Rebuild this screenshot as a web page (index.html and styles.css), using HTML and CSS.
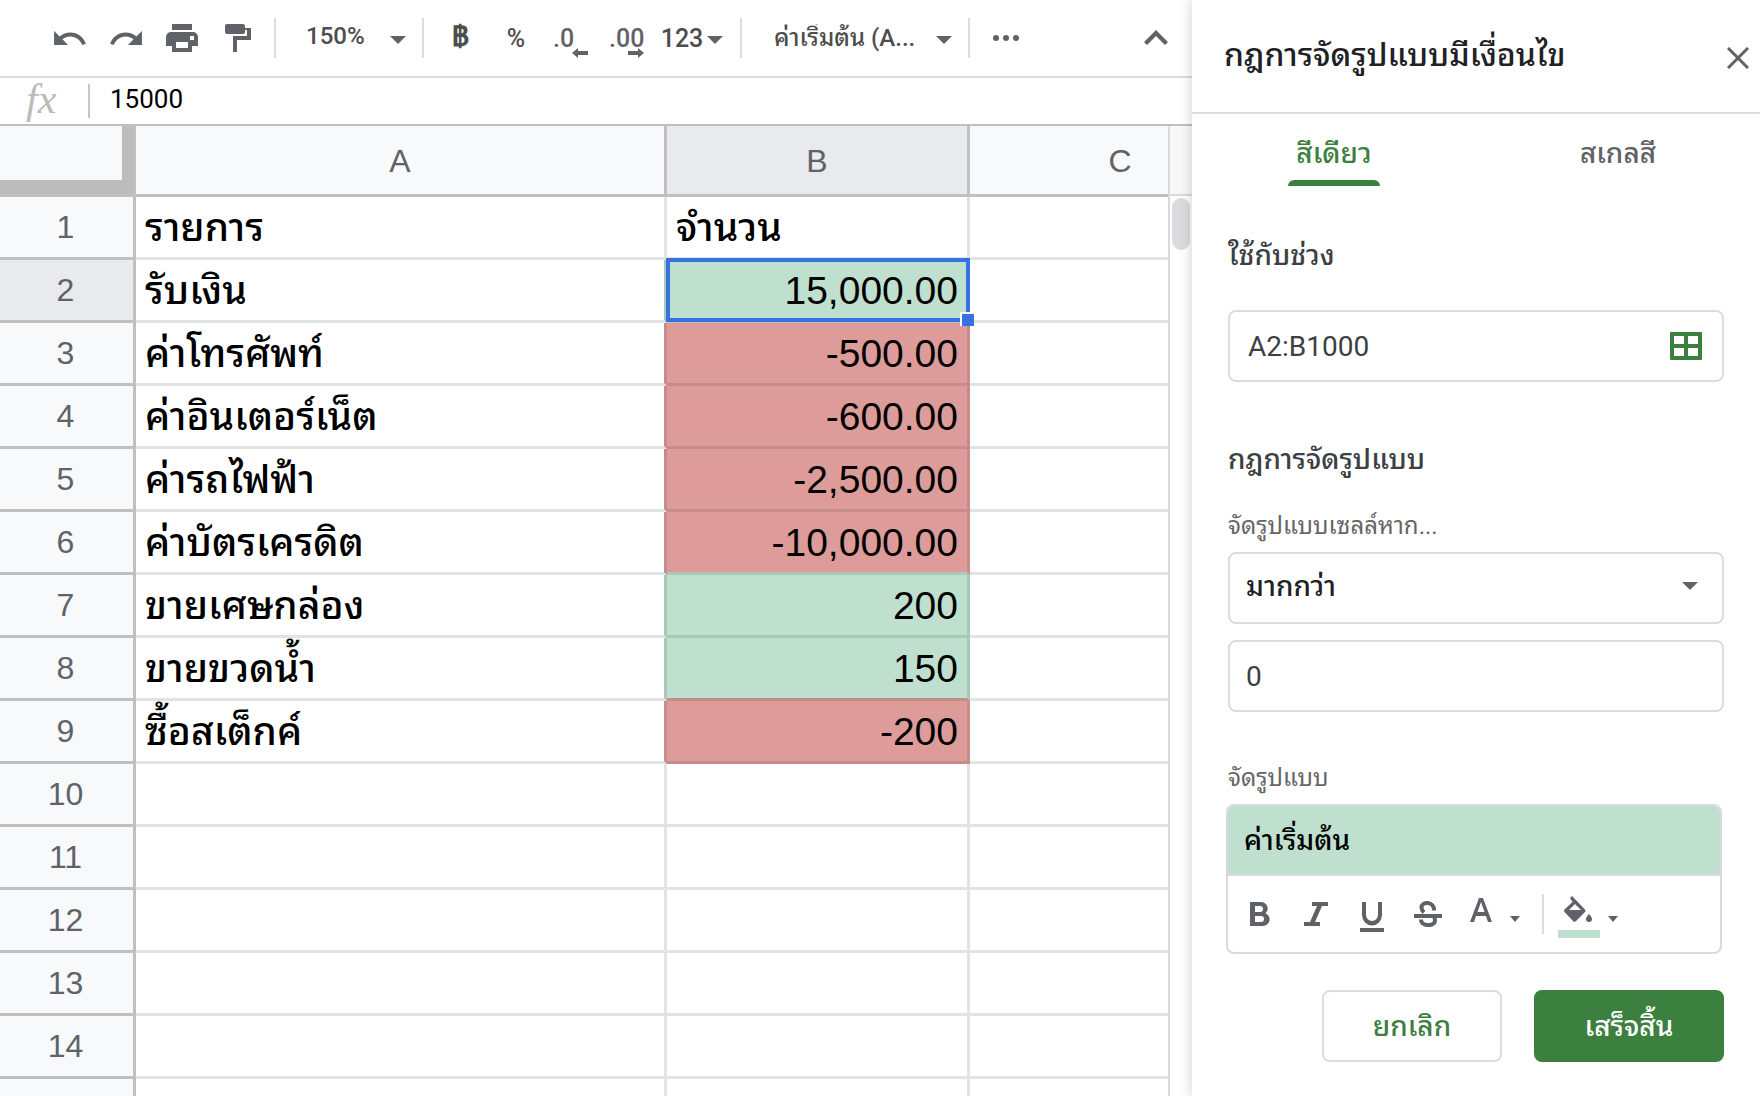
FILE: index.html
```html
<!DOCTYPE html>
<html lang="th">
<head>
    <meta charset="UTF-8">
    <meta name="viewport" content="width=device-width, initial-scale=1.0">
    <title>กฎการจัดรูปแบบมีเงื่อนไข</title>
    <link rel="stylesheet" href="styles.css">
</head>
<body>

    <main class="sheet">

        <!-- Toolbar -->
        <div class="toolbar">
            <button class="tool" aria-label="Undo">
                <svg width="32" height="14" viewBox="2 7 20.5 9"><path d="M12.5 8c-2.65 0-5.05.99-6.9 2.6L2 7v9h9l-3.62-3.62c1.39-1.16 3.16-1.88 5.12-1.88 3.54 0 6.55 2.31 7.6 5.5l2.37-.78C21.08 11.03 17.15 8 12.5 8z"/></svg>
            </button>
            <button class="tool" aria-label="Redo">
                <svg width="32" height="14" viewBox="1.5 7 20.5 9"><path d="M18.4 10.6C16.55 8.99 14.15 8 11.5 8c-4.65 0-8.58 3.03-9.96 7.22L3.9 16c1.05-3.19 4.05-5.5 7.6-5.5 1.95 0 3.73.72 5.12 1.88L13 16h9V7l-3.6 3.6z"/></svg>
            </button>
            <button class="tool" aria-label="Print">
                <svg width="32" height="28" viewBox="0 0 32 28"><path fill-rule="evenodd" d="M6 0h20v6H6zM5 8h22a5 5 0 0 1 5 5v9h-6v6H6v-6H0v-9a5 5 0 0 1 5-5zM10 18v6h12v-6zM24 12v4h4v-4z"/></svg>
            </button>
            <button class="tool" aria-label="Paint format">
                <svg width="26" height="28" viewBox="0 0 26 28"><path d="M2 0h16a2 2 0 0 1 2 2v2h6v12H12v12H8V12h14V6h-2v2a2 2 0 0 1-2 2H2a2 2 0 0 1-2-2V2a2 2 0 0 1 2-2z"/></svg>
            </button>
            <span class="divider"></span>
            <div class="dropdown zoom">
                <select aria-label="Zoom"><option>150%</option></select>
            </div>
            <span class="divider"></span>
            <button class="tool currency">฿</button>
            <button class="tool">%</button>
            <button class="tool decimal">.0
                <svg class="arrow" width="16" height="10" viewBox="0 0 16 10"><path d="M0 5l6-5v3h10v4H6v3z"/></svg>
            </button>
            <button class="tool decimal">.00
                <svg class="arrow" width="16" height="10" viewBox="0 0 16 10"><path d="M16 5l-6-5v3H0v4h10v3z"/></svg>
            </button>
            <button class="tool formats">123 <span class="caret"></span></button>
            <span class="divider"></span>
            <div class="dropdown font">
                <select aria-label="Font"><option>ค่าเริ่มต้น (A...</option></select>
            </div>
            <span class="divider"></span>
            <button class="tool" aria-label="More">
                <svg width="26" height="6" viewBox="0 0 26 6"><circle cx="3" cy="3" r="3"/><circle cx="13" cy="3" r="3"/><circle cx="23" cy="3" r="3"/></svg>
            </button>
            <button class="tool collapse" aria-label="Hide menus">
                <svg width="24" height="16" viewBox="0 0 24 16"><path d="M12 0l12 12-3 3-9-9-9 9-3-3z"/></svg>
            </button>
        </div>

        <!-- Formula bar -->
        <div class="formula-bar">
            <label class="fx" for="formula">fx</label>
            <input id="formula" type="text" value="15000">
        </div>

        <!-- Grid -->
        <div class="grid-area">
            <div class="grid">
                <table>
                    <colgroup>
                        <col class="col-head">
                        <col class="col-a">
                        <col class="col-b">
                        <col class="col-c">
                    </colgroup>
                    <thead>
                        <tr><th class="corner"></th><th>A</th><th class="active">B</th><th>C</th></tr>
                    </thead>
                    <tbody>
                        <tr><th>1</th><td>รายการ</td><td>จำนวน</td><td></td></tr>
                        <tr class="plus"><th class="active">2</th><td>รับเงิน</td><td class="num">15,000.00<span class="selection"></span><span class="handle"></span></td><td></td></tr>
                        <tr class="minus"><th>3</th><td>ค่าโทรศัพท์</td><td class="num">-500.00</td><td></td></tr>
                        <tr class="minus"><th>4</th><td>ค่าอินเตอร์เน็ต</td><td class="num">-600.00</td><td></td></tr>
                        <tr class="minus"><th>5</th><td>ค่ารถไฟฟ้า</td><td class="num">-2,500.00</td><td></td></tr>
                        <tr class="minus before-plus"><th>6</th><td>ค่าบัตรเครดิต</td><td class="num">-10,000.00</td><td></td></tr>
                        <tr class="plus"><th>7</th><td>ขายเศษกล่อง</td><td class="num">200</td><td></td></tr>
                        <tr class="plus before-minus"><th>8</th><td>ขายขวดน้ำ</td><td class="num">150</td><td></td></tr>
                        <tr class="minus"><th>9</th><td>ซื้อสเต็กค์</td><td class="num">-200</td><td></td></tr>
                        <tr><th>10</th><td></td><td></td><td></td></tr>
                        <tr><th>11</th><td></td><td></td><td></td></tr>
                        <tr><th>12</th><td></td><td></td><td></td></tr>
                        <tr><th>13</th><td></td><td></td><td></td></tr>
                        <tr><th>14</th><td></td><td></td><td></td></tr>
                        <tr><th></th><td></td><td></td><td></td></tr>
                    </tbody>
                </table>
            </div>
            <div class="scrollbar">
                <div class="scroll-top"></div>
                <div class="thumb"></div>
            </div>
        </div>
    </main>

    <!-- Conditional format rules -->
    <aside class="panel">
        <header class="panel-header">
            <h1>กฎการจัดรูปแบบมีเงื่อนไข</h1>
            <button class="close" aria-label="Close">
                <svg width="22" height="22" viewBox="0 0 22 22"><path d="M1 1l20 20M21 1L1 21"/></svg>
            </button>
        </header>

        <nav class="tabs">
            <button class="tab current"><span>สีเดียว</span></button>
            <button class="tab"><span>สเกลสี</span></button>
        </nav>

        <form class="rules">
            <label class="title" for="range">ใช้กับช่วง</label>
            <div class="field range">
                <input id="range" type="text" value="A2:B1000">
                <svg width="32" height="28" viewBox="0 0 32 28"><path fill-rule="evenodd" d="M1 0h30a1 1 0 0 1 1 1v26a1 1 0 0 1-1 1H1a1 1 0 0 1-1-1V1a1 1 0 0 1 1-1zM4 4v8h10V4zM18 4v8h10V4zM4 16v8h10v-8zM18 16v8h10v-8z"/></svg>
            </div>

            <h2 class="title">กฎการจัดรูปแบบ</h2>
            <label class="hint" for="condition">จัดรูปแบบเซลล์หาก...</label>
            <div class="field dropdown condition">
                <select id="condition"><option>มากกว่า</option></select>
            </div>
            <div class="field">
                <input type="text" value="0" aria-label="Value">
            </div>

            <p class="hint">จัดรูปแบบ</p>
            <div class="style-box">
                <button type="button" class="preview">ค่าเริ่มต้น</button>
                <div class="style-tools">
                    <button type="button" aria-label="Bold">
                        <svg width="20" height="24" viewBox="0 0 20 24"><path fill-rule="evenodd" d="M0 0h11a7 6.500 0 0 1 4.500 11.200A7 6.700 0 0 1 12 24H0zM5 4v6h5a3 3 0 0 0 0-6zM5 14v6h6a3 3 0 0 0 0-6z"/></svg>
                    </button>
                    <button type="button" aria-label="Italic">
                        <svg width="24" height="24" viewBox="0 0 24 24"><path d="M8 0h16v4h-6l-7 16h5v4H0v-4h6l7-16H8z"/></svg>
                    </button>
                    <button type="button" aria-label="Underline">
                        <svg width="24" height="36" viewBox="0 -6 24 36"><path d="M0 26h24v4H0zM2 0h4v13a6 6 0 0 0 12 0V0h4v13a10 10.500 0 0 1-20 0z"/></svg>
                    </button>
                    <button type="button" aria-label="Strikethrough">
                        <svg width="28" height="26" viewBox="0 0 28 26"><path d="M0 13h28v4H0z"/><path class="line" d="M20 9.500C20.500 0 7.500 0 7.500 6.500C7.500 8.500 8.500 10 10 11.500M7 18.500C7 26 21 25.500 21 19.500Q21 17.500 20 16"/></svg>
                    </button>
                    <button type="button" class="with-caret" aria-label="Text color">
                        <svg width="22" height="24" viewBox="0 0 22 24"><path fill-rule="evenodd" d="M9 0h4l9 24h-4l-2-6H6l-2 6H0zM7.500 14h7L11 4z"/></svg>
                        <span class="caret small"></span>
                    </button>
                    <span class="divider"></span>
                    <button type="button" class="with-caret fill" aria-label="Fill color">
                        <span class="bucket">
                            <svg width="30" height="26" viewBox="0 0 30 26"><path fill-rule="evenodd" d="M6 2l2-2 13 13.500a2 2 0 0 1 0 2.500l-9 9a2 2 0 0 1-3 0l-8.500-9a2 2 0 0 1 0-2.500L8.500 6zM11 8l-6 6h12z"/><path d="M25 18c2 2 3 4 3 5a3 3 0 0 1-6 0c0-1 1-3 3-5z"/></svg>
                        </span>
                        <span class="caret small"></span>
                    </button>
                </div>
            </div>

            <div class="actions">
                <button type="button" class="cancel">ยกเลิก</button>
                <button type="submit" class="done">เสร็จสิ้น</button>
            </div>
        </form>
    </aside>

</body>
</html>
```
FILE: styles.css
```css
* {
    box-sizing: border-box;
}

body {
    margin: 0;
    display: flex;
    height: 100vh;
    overflow: hidden;
    background-color: #fff;
    font-family: Roboto, "Noto Sans Thai Looped", "Liberation Sans", sans-serif;
    color: #3c4043;
}

button, select, input {
    margin: 0;
    padding: 0;
    border: none;
    background: none;
    font: inherit;
    color: inherit;
    outline: none;
}

button {
    cursor: pointer;
}

svg {
    display: block;
    fill: #5f6368;
}

.sheet {
    flex: 1;
    min-width: 0;
    display: flex;
    flex-direction: column;
}

/* toolbar */
.toolbar {
    display: flex;
    align-items: center;
    height: 78px;
    padding-left: 42px;
    padding-right: 8px;
    border-bottom: 2px solid #dadce0;
    font-size: 25px;
    font-weight: 500;
    color: #4d4d4d;
}

.tool {
    flex: none;
    display: flex;
    align-items: center;
    justify-content: center;
    width: 56px;
    height: 48px;
}

.divider {
    flex: none;
    width: 2px;
    height: 40px;
    margin-left: 8px;
    background-color: #dadce0;
}

.divider + .tool {
    margin-left: 8px;
}

.dropdown + .divider {
    margin-left: 0;
}

.dropdown {
    position: relative;
}

.dropdown select {
    width: 100%;
    height: 100%;
    appearance: none;
}

.dropdown::after, .caret {
    content: "";
    border: 8px solid transparent;
    border-top-color: #5f6368;
    border-bottom: none;
}

.dropdown::after {
    position: absolute;
    top: 50%;
    right: 16px;
    margin-top: -2px;
    pointer-events: none;
}

.zoom, .font {
    width: 146px;
    height: 48px;
    font-size: 24px;
}

.zoom select {
    padding-left: 30px;
    padding-bottom: 4px;
}

.font {
    width: 226px;
}

.font select {
    padding-left: 32px;
}

.currency {
    padding-bottom: 4px;
    font-family: "Liberation Sans", sans-serif;
    font-size: 28px;
    font-weight: 700;
}

.decimal {
    position: relative;
    justify-content: flex-start;
    padding-left: 9px;
    color: #5f6368;
}

.arrow {
    position: absolute;
    right: 12px;
    bottom: 4px;
}

.formats {
    width: 76px;
    gap: 4px;
    padding-right: 4px;
}

.formats .caret {
    margin-top: 4px;
}

.collapse {
    margin-left: auto;
}

/* formula bar */
.formula-bar {
    display: flex;
    align-items: flex-start;
    height: 48px;
    padding-top: 6px;
    border-bottom: 2px solid #c0c0c0;
}

.fx {
    width: 90px;
    height: 34px;
    padding-left: 26px;
    border-right: 2px solid #c6c6c6;
    font: italic 42px/30px "Liberation Serif", serif;
    color: #bbb;
}

.formula-bar input {
    flex: 1;
    height: 30px;
    padding-left: 20px;
    font-size: 26px;
    color: #000;
}

/* grid */
.grid-area {
    flex: 1;
    min-height: 0;
    display: flex;
}

.grid {
    flex: 1;
    min-width: 0;
    overflow: hidden;
}

table {
    width: 1273px;
    table-layout: fixed;
    border-collapse: separate;
    border-spacing: 0;
    font-family: "Liberation Sans", "Noto Sans Thai Looped", sans-serif;
}

.col-head {
    width: 136px;
}

.col-a {
    width: 531px;
}

.col-b, .col-c {
    width: 303px;
}

th, td {
    height: 63px;
    padding: 2px 9px 0;
    border-right: 3px solid #e2e3e3;
    border-bottom: 3px solid #e2e3e3;
    line-height: 44px;
    white-space: nowrap;
}

th {
    background-color: #f8f9fb;
    border-color: #c0c0c0;
    font-size: 32px;
    font-weight: normal;
    color: #5f6368;
}

tbody th {
    padding: 0 11px 0 9px;
}

thead th {
    height: 71px;
}

th.active {
    background-color: #e8eaed;
}

.corner {
    box-shadow: inset -11px -14px 0 #bcbcbc;
}

td {
    position: relative;
    font-size: 39px;
    font-weight: 500;
    color: #000;
}

.num {
    text-align: right;
}

.plus .num {
    background-color: #bfe0cf;
    border-color: #aac8b8;
}

.plus td:nth-child(2) {
    border-right-color: #aac8b8;
}

.minus .num {
    background-color: #dd9c9a;
    border-color: #c58c8b;
}

.minus td:nth-child(2) {
    border-right-color: #c58c8b;
}

.before-plus .num {
    border-bottom-color: #aac8b8;
}

.before-minus .num {
    border-bottom-color: #c58c8b;
}

.selection {
    position: absolute;
    inset: -2px -3px -2px -1px;
    border: 4px solid #3871e0;
}

.handle {
    position: absolute;
    z-index: 1;
    right: -7px;
    bottom: -6px;
    width: 14px;
    height: 14px;
    border: solid #fff;
    border-width: 2px 0 0 2px;
    background-color: #3871e0;
}

.scrollbar {
    width: 24px;
    border-left: 2px solid #dadada;
}

.scroll-top {
    height: 70px;
    border-bottom: 2px solid #dadada;
    background-color: #f8f8f8;
}

.thumb {
    width: 18px;
    height: 52px;
    margin: 2px;
    border-radius: 9px;
    background-color: #dadce0;
}

/* side panel */
.panel {
    position: relative;
    z-index: 2;
    flex: none;
    width: 568px;
    background-color: #fff;
    box-shadow: 0 0 12px rgba(0, 0, 0, 0.2);
}

.panel-header {
    display: flex;
    align-items: center;
    justify-content: space-between;
    height: 114px;
    padding: 4px 11px 0 32px;
    border-bottom: 2px solid #dadce0;
}

h1 {
    margin: 0;
    padding-bottom: 6px;
    font-size: 32px;
    line-height: 48px;
    font-weight: 500;
    color: #202124;
}

.close svg {
    fill: none;
    stroke: #5f6368;
    stroke-width: 3;
}

.tabs {
    display: flex;
    height: 72px;
}

.tab {
    flex: 1;
    display: flex;
    justify-content: center;
    font-size: 28px;
    font-weight: 500;
    color: #5f6368;
}

.tab span {
    position: relative;
    height: 72px;
    padding: 0 8px;
    line-height: 80px;
}

.current span {
    color: #3c8040;
}

.current span::after {
    content: "";
    position: absolute;
    left: 0;
    right: 0;
    bottom: 0;
    height: 6px;
    border-radius: 6px 6px 0 0;
    background-color: #3c8040;
}

.rules {
    padding: 48px 36px 0;
    font-size: 28px;
}

.title {
    display: block;
    margin: 0;
    font-size: 28px;
    font-weight: 500;
    line-height: 44px;
}

.hint {
    display: block;
    margin: 0;
    font-size: 24px;
    line-height: 36px;
    color: #666;
}

h2.title {
    margin-bottom: 26px;
}

.field {
    display: flex;
    align-items: center;
    height: 72px;
    margin-bottom: 16px;
    border: 2px solid #dadce0;
    border-radius: 8px;
}

.field input, .field select {
    flex: 1;
    min-width: 0;
    padding-left: 16px;
}

.range {
    margin: 32px 0 56px;
    padding-right: 20px;
}

.range input {
    padding-left: 18px;
}

.range svg {
    fill: #3c8040;
}

.condition {
    margin-top: 8px;
    padding-bottom: 4px;
    font-weight: 500;
    color: #202124;
}

.condition::after {
    right: 24px;
    margin-top: -6px;
}

.field + .hint {
    margin-top: 48px;
}

.style-box {
    margin: 8px 2px 36px -2px;
    border: 2px solid #dadada;
    border-radius: 8px;
    overflow: hidden;
}

.preview {
    display: block;
    width: 100%;
    height: 70px;
    padding-left: 16px;
    padding-bottom: 6px;
    border-bottom: 2px solid #dadada;
    background-color: #bfe0cf;
    text-align: left;
    font-weight: 500;
    color: #000;
}

.style-tools {
    display: flex;
    align-items: center;
    height: 76px;
    padding-left: 4px;
}

.style-tools button {
    display: flex;
    align-items: center;
    justify-content: center;
    width: 56px;
    height: 48px;
}

.style-tools .with-caret {
    align-items: flex-end;
    width: 78px;
    gap: 18px;
}

.with-caret > svg, .caret.small {
    margin-bottom: 16px;
}

.style-tools .fill {
    width: 88px;
    gap: 8px;
}

.caret.small {
    border-width: 6px 5px 0;
}

.bucket {
    padding: 0 6px 8px;
    border-bottom: 8px solid #bfe0cf;
}

.line {
    fill: none;
    stroke: #5f6368;
    stroke-width: 4;
}

.actions {
    display: flex;
    justify-content: flex-end;
    gap: 32px;
}

.actions button {
    width: 180px;
    height: 72px;
    padding-bottom: 6px;
    border: 2px solid #dadce0;
    border-radius: 8px;
    font-weight: 500;
    color: #3c8040;
}

.actions .done {
    width: 190px;
    border-color: #3c8040;
    background-color: #3c8040;
    color: #fff;
}
```
